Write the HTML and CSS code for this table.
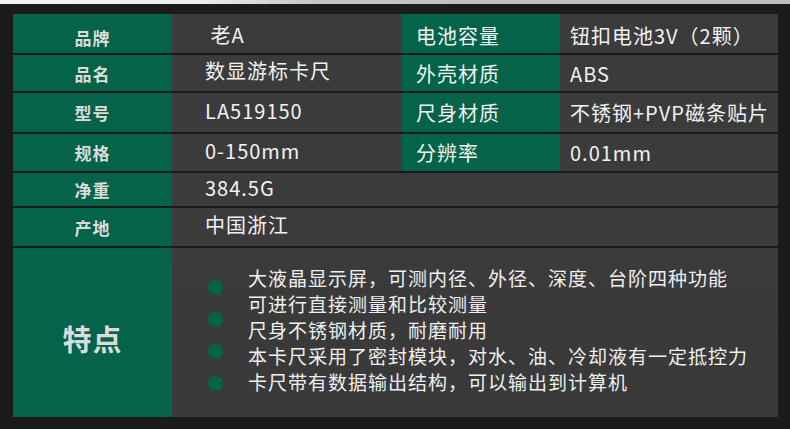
FILE: index.html
```html
<!DOCTYPE html>
<html lang="zh-CN">
<head>
<meta charset="utf-8">
<title>参数</title>
<link rel="stylesheet" href="styles.css">
</head>
<body>
<div class="strip"></div>
<div class="page">
  <div class="table">
    <div class="lab r1">品牌</div>
    <div class="val v1 first">&nbsp;老A</div>
    <div class="lab2 r1">电池容量</div>
    <div class="val2 r1">钮扣电池3V（2颗）</div>

    <div class="lab">品名</div>
    <div class="val v1">数显游标卡尺</div>
    <div class="lab2">外壳材质</div>
    <div class="val2">ABS</div>

    <div class="lab">型号</div>
    <div class="val v1">LA519150</div>
    <div class="lab2">尺身材质</div>
    <div class="val2">不锈钢+PVP磁条贴片</div>

    <div class="lab">规格</div>
    <div class="val v1">0-150mm</div>
    <div class="lab2">分辨率</div>
    <div class="val2">0.01mm</div>

    <div class="lab">净重</div>
    <div class="val v1 span">384.5G</div>

    <div class="lab">产地</div>
    <div class="val v1 span">中国浙江</div>

    <div class="lab big">特点</div>
    <div class="feat span">
      <div class="dots">
        <span class="dot"></span>
        <span class="dot"></span>
        <span class="dot"></span>
        <span class="dot"></span>
      </div>
      <div class="ftext">
        <p>大液晶显示屏，可测内径、外径、深度、台阶四种功能</p>
        <p>可进行直接测量和比较测量</p>
        <p>尺身不锈钢材质，耐磨耐用</p>
        <p>本卡尺采用了密封模块，对水、油、冷却液有一定抵控力</p>
        <p>卡尺带有数据输出结构，可以输出到计算机</p>
      </div>
    </div>
  </div>
</div>
</body>
</html>
```

FILE: styles.css
```css
* { box-sizing: border-box; }
html, body {
  margin: 0;
  padding: 0;
  background: #1b1b1b;
}
body {
  width: 790px;
  height: 429px;
  overflow: hidden;
  font-family: "Noto Sans CJK SC", "Noto Sans", sans-serif;
}
.strip {
  height: 4px;
  background: linear-gradient(90deg, #f3f3f7 0%, #eeeef2 25%, #c4c4c6 40%, #bdbdbd 100%);
}
.page {
  padding: 10px 12px 0 13px;
  background: #1b1b1b;
}
.table {
  display: grid;
  grid-template-columns: 159px 230px 158px 218px;
  grid-template-rows: 39px 36px 39px 37px 33px 38px 169px;
  row-gap: 2px;
  background: #1a1a1a;
}
.lab {
  background: #046348;
  color: #dcdcdc;
  font-weight: 700;
  font-size: 17px;
  letter-spacing: 1px;
  display: flex;
  align-items: center;
  justify-content: center;
}
.lab.r1 { padding-top: 8px; }
.lab.big {
  font-size: 29px;
  letter-spacing: 1px;
  padding-top: 10px;
}
.val, .val2 {
  background: #3b3b3b;
  color: #f2f2f2;
  font-size: 20px;
  letter-spacing: 1px;
  display: flex;
  align-items: center;
}
.val { padding-left: 33px; padding-bottom: 5px; }
.val.first { padding-bottom: 0; padding-top: 2px; }
.val2 { padding-left: 10px; }
.val2.r1 { padding-top: 4px; }
.lab2 {
  background: #046348;
  color: #f2f2f2;
  font-size: 20px;
  letter-spacing: 1px;
  display: flex;
  align-items: center;
  padding-left: 14px;
}
.lab2.r1 { padding-top: 4px; }
.span { grid-column: 2 / 5; }
.feat {
  background: linear-gradient(180deg, #3b3b3b 0%, #393939 100%);
  display: flex;
  padding-left: 36px;
}
.dots {
  display: flex;
  flex-direction: column;
  gap: 17px;
  padding-top: 32px;
}
.dot {
  width: 15px;
  height: 15px;
  border-radius: 50%;
  background: #046348;
}
.ftext {
  margin-left: 25px;
  padding-top: 17px;
  color: #f0f0f0;
  font-size: 19px;
  letter-spacing: 1px;
  line-height: 26px;
}
.ftext p { margin: 0; }
```
